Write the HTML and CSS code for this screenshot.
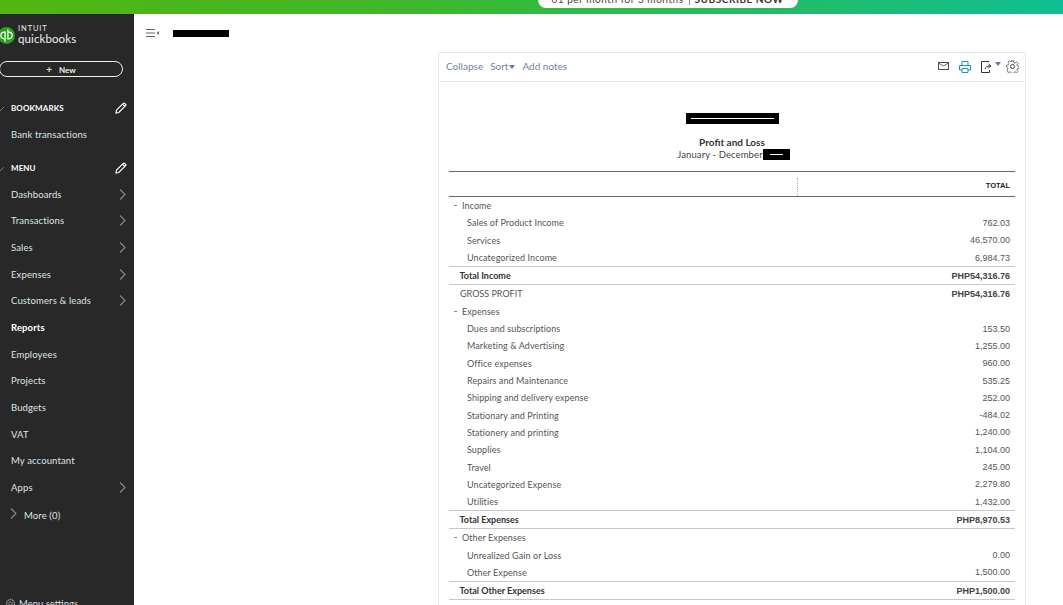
FILE: index.html
```html
<!DOCTYPE html>
<html lang="en">
<head>
<meta charset="utf-8">
<title>Profit and Loss</title>
<link rel="stylesheet" href="styles.css">
</head>
<body>
<div class="banner"><div class="promo"><span>01 per month for 3 months</span><i class="promo-sep"></i><b>SUBSCRIBE NOW</b></div></div>
<div class="app">
  <aside class="sidebar">
    <div class="logo">
      <svg class="logo-mark" viewBox="0 0 18 18" width="17" height="17"><circle cx="9" cy="9" r="9" fill="#2ca01c"/><path d="M6.500 5.500a3.500 3.500 0 0 0 0 7h1V15.500M7.500 12.500V5.500h-1M11.500 12.500a3.500 3.500 0 0 0 0-7h-1V2.500M10.500 5.500v7h1" fill="none" stroke="#fff" stroke-width="1.300"/></svg>
      <div class="logo-text"><span class="logo-intuit">INTUIT</span><span class="logo-qb">quickbooks</span></div>
    </div>
    <button class="new-btn"><span class="plus">+</span>New</button>
    <div class="section first-section">
      <svg class="check" viewBox="0 0 6 6" width="6" height="6"><path d="M0 4l1 1 4-4" fill="none" stroke="#777"/></svg>
      <span>BOOKMARKS</span>
      <svg class="pencil" viewBox="0 0 12 12" width="12" height="12"><path d="M1.500 8.200 8.300 1.400a1 1 0 0 1 1.400 0l.9.9a1 1 0 0 1 0 1.400L3.800 10.500 1 11z M7.500 2.200l2.300 2.300" fill="none" stroke="#fff" stroke-width="1.200"/></svg>
    </div>
    <a class="nav nav-single">Bank transactions</a>
    <div class="section menu-section">
      <svg class="check" viewBox="0 0 6 6" width="6" height="6"><path d="M0 4l1 1 4-4" fill="none" stroke="#777"/></svg>
      <span>MENU</span>
      <svg class="pencil" viewBox="0 0 12 12" width="12" height="12"><path d="M1.500 8.200 8.300 1.400a1 1 0 0 1 1.400 0l.9.9a1 1 0 0 1 0 1.400L3.800 10.500 1 11z M7.500 2.200l2.300 2.300" fill="none" stroke="#fff" stroke-width="1.200"/></svg>
    </div>
    <a class="nav">Dashboards<svg class="chev" viewBox="0 0 7 11" width="7" height="11"><path d="M1 .5l5 5-5 5" fill="none" stroke="#8a8a8a" stroke-width="1.100"/></svg></a>
    <a class="nav">Transactions<svg class="chev" viewBox="0 0 7 11" width="7" height="11"><path d="M1 .5l5 5-5 5" fill="none" stroke="#8a8a8a" stroke-width="1.100"/></svg></a>
    <a class="nav">Sales<svg class="chev" viewBox="0 0 7 11" width="7" height="11"><path d="M1 .5l5 5-5 5" fill="none" stroke="#8a8a8a" stroke-width="1.100"/></svg></a>
    <a class="nav">Expenses<svg class="chev" viewBox="0 0 7 11" width="7" height="11"><path d="M1 .5l5 5-5 5" fill="none" stroke="#8a8a8a" stroke-width="1.100"/></svg></a>
    <a class="nav">Customers &amp; leads<svg class="chev" viewBox="0 0 7 11" width="7" height="11"><path d="M1 .5l5 5-5 5" fill="none" stroke="#8a8a8a" stroke-width="1.100"/></svg></a>
    <a class="nav nav-active">Reports</a>
    <a class="nav">Employees</a>
    <a class="nav">Projects</a>
    <a class="nav">Budgets</a>
    <a class="nav">VAT</a>
    <a class="nav">My accountant</a>
    <a class="nav">Apps<svg class="chev" viewBox="0 0 7 11" width="7" height="11"><path d="M1 .5l5 5-5 5" fill="none" stroke="#8a8a8a" stroke-width="1.100"/></svg></a>
    <a class="nav nav-more"><svg class="chev-more" viewBox="0 0 7 11" width="7" height="11"><path d="M1 .5l5 5-5 5" fill="none" stroke="#8a8a8a" stroke-width="1.100"/></svg>More (0)</a>
    <div class="menu-settings">
      <svg viewBox="0 0 12 12" width="11" height="11"><circle cx="6" cy="6" r="1.800" fill="none" stroke="#999"/><circle cx="6" cy="6" r="4.300" fill="none" stroke="#999" stroke-dasharray="1.800 .9" stroke-width="1.500"/></svg>
      <span>Menu settings</span>
    </div>
  </aside>
  <main class="main">
    <div class="page-head">
      <svg class="hamburger" viewBox="0 0 13 8" width="13" height="8"><path d="M0 .5h9M0 4h9M0 7.500h9" stroke="#666" stroke-width="1"/><path d="M13 2v4l-2.500-2z" fill="#666"/></svg>
      <div class="redact-title"></div>
    </div>
    <section class="report">
      <div class="toolbar">
        <a>Collapse</a>
        <a>Sort<i class="caret"></i></a>
        <a>Add notes</a>
        <div class="tools">
          <svg class="t-mail" viewBox="0 0 12 9" width="12" height="9"><rect x=".5" y=".5" width="11" height="8" fill="none" stroke="#333"/><path d="M1 1.500l5 3 5-3" fill="none" stroke="#555"/></svg>
          <svg class="t-print" viewBox="0 0 12 12" width="12" height="12"><path d="M3 4V.5h6V4M3 9H.5V4.500h11V9H9M3 7.500h6v4H3z" fill="none" stroke="#1593c8"/></svg>
          <svg class="t-export" viewBox="0 0 14 12" width="14" height="12"><path d="M8 .5H.5v11h8V9" fill="none" stroke="#333"/><path d="M4 8c.5-2 2-3 5-3M7.500 3 10 5 7.500 7" fill="none" stroke="#333"/></svg>
          <i class="caret t-caret"></i>
          <svg class="t-gear" viewBox="0 0 13 13" width="13" height="13"><circle cx="6.500" cy="6.500" r="2" fill="none" stroke="#445"/><path d="M5.500.7h2l.3 1.700 1.300.6 1.500-1 1.300 1.400-1 1.500.6 1.200 1.700.4v1.900l-1.700.3-.6 1.300 1 1.500-1.300 1.300-1.500-1-1.300.6-.3 1.700h-2l-.3-1.700-1.300-.6-1.500 1L1 10.200l1-1.500-.6-1.300L.6 7V5.200l1.800-.4.600-1.200-1-1.500 1.300-1.400 1.500 1 1.300-.6z" fill="none" stroke="#556" stroke-width=".8"/></svg>
        </div>
      </div>
      <div class="report-title">
        <div class="redact-company"><i></i></div>
        <h1>Profit and Loss</h1>
        <p>January - December<span class="redact-year"><i></i></span></p>
      </div>
      <div class="table">
        <div class="thead"><div class="th-blank"></div><div class="th-total">TOTAL</div></div>
        <div class="row group"><span><i class="dash"></i>Income</span></div>
        <div class="row sub"><span>Sales of Product Income</span><b>762.03</b></div>
        <div class="row sub"><span>Services</span><b>46,570.00</b></div>
        <div class="row sub"><span>Uncategorized Income</span><b>6,984.73</b></div>
        <div class="row total"><span>Total Income</span><b>PHP54,316.76</b></div>
        <div class="row gross"><span>GROSS PROFIT</span><b>PHP54,316.76</b></div>
        <div class="row group"><span><i class="dash"></i>Expenses</span></div>
        <div class="row sub"><span>Dues and subscriptions</span><b>153.50</b></div>
        <div class="row sub"><span>Marketing &amp; Advertising</span><b>1,255.00</b></div>
        <div class="row sub"><span>Office expenses</span><b>960.00</b></div>
        <div class="row sub"><span>Repairs and Maintenance</span><b>535.25</b></div>
        <div class="row sub"><span>Shipping and delivery expense</span><b>252.00</b></div>
        <div class="row sub"><span>Stationary and Printing</span><b>-484.02</b></div>
        <div class="row sub"><span>Stationery and printing</span><b>1,240.00</b></div>
        <div class="row sub"><span>Supplies</span><b>1,104.00</b></div>
        <div class="row sub"><span>Travel</span><b>245.00</b></div>
        <div class="row sub"><span>Uncategorized Expense</span><b>2,279.80</b></div>
        <div class="row sub"><span>Utilities</span><b>1,432.00</b></div>
        <div class="row total"><span>Total Expenses</span><b>PHP8,970.53</b></div>
        <div class="row group"><span><i class="dash"></i>Other Expenses</span></div>
        <div class="row sub"><span>Unrealized Gain or Loss</span><b>0.00</b></div>
        <div class="row sub"><span>Other Expense</span><b>1,500.00</b></div>
        <div class="row total"><span>Total Other Expenses</span><b>PHP1,500.00</b></div>
      </div>
    </section>
  </main>
</div>
</body>
</html>
```
FILE: styles.css
```css
* { box-sizing: border-box; }
html, body { margin: 0; height: 605px; overflow: hidden; background: #fff; }
body { font-family: "Lato", "Liberation Sans", sans-serif; font-size: 9px; color: #444; }
.banner { height: 14px; background: linear-gradient(90deg, #53b513 0%, #3cb82b 40%, #0fbf93 100%); position: relative; overflow: hidden; display: flex; justify-content: center; padding-left: 272px; }
.promo { width: 260px; height: 8px; background: #fff; border-radius: 0 0 9px 9px; display: flex; justify-content: center; align-items: flex-start; gap: 5px; font-size: 10px; line-height: 10px; letter-spacing: .55px; color: #444; overflow: hidden; }
.promo span, .promo b { position: relative; top: -6px; white-space: nowrap; }
.promo b { color: #333; }
.promo-sep { flex: none; width: 1px; height: 5px; background: #888; }
.app { display: flex; height: 591px; }
.sidebar { width: 134px; flex: none; background: #282828; color: #dfe3e6; display: flex; flex-direction: column; position: relative; overflow: hidden; }
.logo { display: flex; align-items: center; height: 42px; margin-left: -2px; gap: 3px; }
.logo-text { display: flex; flex-direction: column; color: #eee; line-height: 1; }
.logo-intuit { font-size: 7.500px; font-weight: 400; letter-spacing: .9px; line-height: 8px; }
.logo-qb { font-size: 11.500px; font-weight: 400; line-height: 12px; letter-spacing: .1px; }
.new-btn { width: 124px; height: 16px; margin: 5px 0 0 -1px; border: 1px solid #eee; border-radius: 8px; background: transparent; color: #eee; font: 700 8px "Lato", sans-serif; padding: 0; }
.plus { font-size: 10px; margin-right: 7px; }
.section { display: flex; align-items: center; height: 16px; font-size: 8px; font-weight: 700; color: #fff; letter-spacing: .1px; position: relative; padding-left: 11px; }
.first-section { margin-top: 23px; }
.menu-section { margin-top: 12px; }
.check { position: absolute; left: -1px; top: 6px; }
.pencil { position: absolute; left: 115px; top: 2px; }
.nav { display: flex; align-items: center; height: 26.7px; padding-left: 11px; font-size: 9.500px; color: #dfe3e6; letter-spacing: .12px; position: relative; }
.nav-single { margin-top: 5px; }
.nav-active { color: #fff; font-weight: 700; }
.menu-section + .nav { margin-top: 5px; }
.chev { position: absolute; left: 119px; top: 8px; }
.nav-more { padding-left: 24px; padding-top: 2px; }
.chev-more { position: absolute; left: 10px; top: 7px; }
.menu-settings { position: absolute; left: 5px; top: 584px; display: flex; gap: 3px; align-items: center; font-size: 9.500px; color: #d9dde0; }
.main { flex: 1; min-width: 0; }
.page-head { height: 38px; display: flex; align-items: center; padding: 0 0 0 12px; }
.hamburger { margin-top: -1px; }
.redact-title { width: 56px; height: 7px; background: #000; margin: 1px 0 0 14px; }
.report { margin-left: 304px; width: 588px; border: 1px solid #e3e8f2; border-bottom: 0; height: 553px; overflow: hidden; }
.toolbar { height: 29px; border-bottom: 1px solid #e3e8f2; display: flex; align-items: center; gap: 7px; padding: 0 6px 2px 7px; color: #6d85a8; font-size: 10px; }
.caret { display: inline-block; width: 0; height: 0; margin-left: 1px; border: 3.500px solid transparent; border-top: 4px solid #5d7aa5; border-bottom: 0; vertical-align: 1px; }
.tools { margin-left: auto; display: flex; align-items: center; }
.t-mail { margin-right: 10px; width: 11px; height: 8px; }
.t-print { margin-right: 10px; margin-top: 1px; }
.t-export { margin-top: 1px; }
.t-caret { margin: -5px 0 0 0; }
.t-gear { margin-left: 5px; margin-top: 1px; }
.report-title { height: 89px; padding-top: 31px; text-align: center; }
.redact-company { width: 93px; height: 11px; background: #000; margin-left: 247px; display: flex; align-items: center; justify-content: center; }
.redact-company i { display: block; width: 83px; height: 1px; background: #fff; }
.report-title h1 { margin: 12px 0 0; font-size: 10px; font-weight: 700; line-height: 12px; color: #333; }
.report-title p { margin: 1px 0 0; padding-left: 3px; font-size: 9.500px; line-height: 12px; color: #444; letter-spacing: .1px; }
.redact-year { display: inline-flex; vertical-align: top; width: 27px; height: 11px; background: #000; align-items: center; justify-content: center; }
.redact-year i { display: block; width: 13px; height: 1px; background: #fff; margin-left: 1px; }
.table { margin: 0 10px; }
.thead { display: flex; height: 26px; border-top: 1px solid #666; border-bottom: 1px solid #666; }
.th-blank { width: 349px; margin-top: 6px; border-right: 1px dotted #aaa; }
.th-total { flex: 1; text-align: right; padding: 9px 5px 0 0; font: 700 7.500px/10px "Liberation Sans", sans-serif; color: #222; }
.row { display: flex; justify-content: space-between; align-items: center; height: 17.300px; padding-right: 5px; font-size: 9px; color: #555; letter-spacing: .08px; }
.row b { font: 400 9px "Liberation Sans", sans-serif; color: #555; letter-spacing: 0; }
.group { padding-left: 5px; }
.group span { display: flex; align-items: center; }
.dash { display: block; width: 3px; height: 1px; background: #888; margin-right: 5px; }
.sub { padding-left: 18px; }
.total { height: 19px; padding-left: 10.500px; border-top: 1px solid #c8c8c8; border-bottom: 1px solid #c8c8c8; color: #333; font-weight: 700; letter-spacing: 0; }
.total b { font-weight: 700; color: #444; }
.gross { height: 17.500px; padding-left: 11px; letter-spacing: 0; }
.gross b { font-weight: 700; color: #444; }
```
